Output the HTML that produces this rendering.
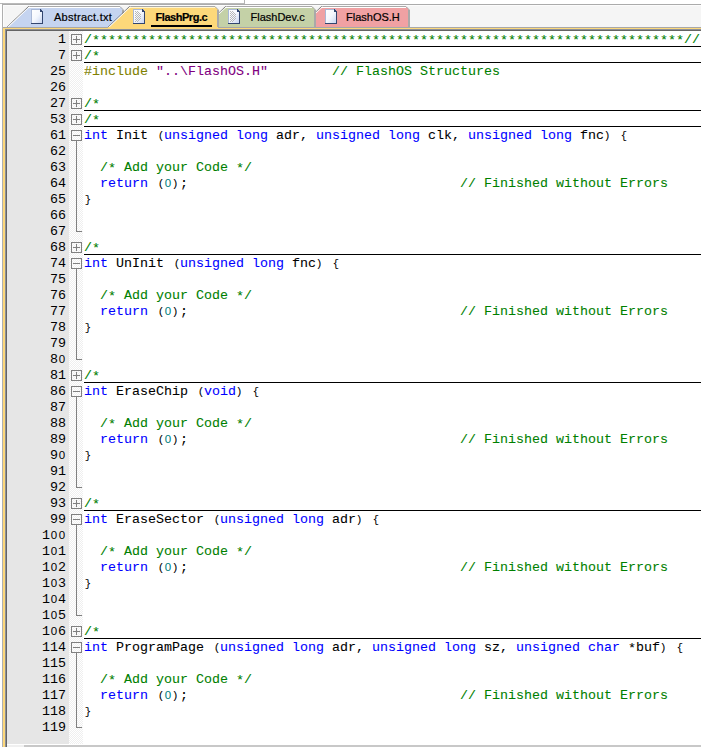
<!DOCTYPE html>
<html><head><meta charset="utf-8"><style>
html,body{margin:0;padding:0;}
body{width:701px;height:747px;overflow:hidden;position:relative;background:#fff;}
#wrap{position:absolute;left:0;top:0;width:701px;height:747px;overflow:hidden;}
.abs{position:absolute;}
.ln{position:absolute;left:7px;width:59px;height:16px;text-align:right;font:13.333px/16px "Liberation Mono",monospace;color:#000;}
.cd{position:absolute;left:84px;height:16px;white-space:pre;font:13.333px/16px "Liberation Mono",monospace;color:#000;-webkit-text-stroke:0.08px;}
.sep{position:absolute;left:84px;width:700px;height:1px;background:#000;}
.box{position:absolute;left:71px;width:9px;height:9px;border:1px solid #808080;background:transparent;}
.box i{position:absolute;background:#808080;}
.box .h{left:1px;top:4px;width:7px;height:1px;}
.box .v{left:4px;top:1px;width:1px;height:7px;}
.fl{position:absolute;left:76px;width:1px;background:#808080;}
.st{font-weight:normal;position:relative;top:1px;}
.pr{font-weight:normal;display:inline-block;width:8px;text-align:center;font-size:11px;line-height:12px;}
.pl{position:relative;left:1px;}
.prr{position:relative;left:-1px;}
.zr{font-weight:normal;display:inline-block;width:8px;text-align:center;font-family:"Liberation Sans",sans-serif;font-size:11.5px;line-height:12px;}
.br{font-weight:normal;display:inline-block;width:8px;text-align:center;font-size:10.5px;line-height:12px;}
.fh{position:absolute;left:76px;width:6px;height:1px;background:#808080;}
</style></head><body><div id="wrap">
<svg class="abs" style="left:0;top:0" width="701" height="747">
<defs><linearGradient id="pg" x1="0" y1="0" x2="1" y2="1"><stop offset="0" stop-color="#ffffff"/><stop offset="0.5" stop-color="#f4f7fd"/><stop offset="1" stop-color="#c9d6f2"/></linearGradient></defs>
<g shape-rendering="crispEdges">
<rect x="2" y="3" width="699" height="744" fill="#f5f5f5"/>
<rect x="0" y="0" width="701" height="3" fill="#fff"/>
<rect x="245" y="0" width="456" height="4" fill="#fff"/>
<rect x="0" y="3" width="245" height="1" fill="#bababa"/>
<rect x="244" y="0" width="1" height="4" fill="#b4b4b4"/>
<rect x="2" y="4" width="699" height="1" fill="#ababab"/>
<rect x="2" y="3" width="1" height="744" fill="#b0b0b0"/>
<rect x="3" y="5" width="698" height="1" fill="#fcfcfc"/>
<rect x="3" y="5" width="1" height="22" fill="#fcfcfc"/>
<rect x="3" y="27" width="698" height="1" fill="#a8a8a8"/>
</g>
<polygon points="301,27 321,8 321,7 406,7 409,10 409,27" fill="#f0a1a3" shape-rendering="crispEdges"/>
<rect x="321" y="6" width="85" height="1" fill="#a9a9a9"/>
<rect x="321" y="7" width="85" height="1" fill="#ffffff"/>
<line x1="406" y1="6.5" x2="409.5" y2="10" stroke="#a9a9a9" stroke-width="1"/>
<rect x="408" y="10" width="2" height="17" fill="#a9a9a9"/>
<line x1="299.5" y1="27.5" x2="321.5" y2="6.5" stroke="#6a6a6a" stroke-width="1" stroke-dasharray="1.2 0.3"/>
<line x1="300.7" y1="27.5" x2="322.5" y2="6.9" stroke="#ffffff" stroke-width="0.9"/>
<polygon points="205,27 225,8 225,7 312,7 315,10 315,27" fill="#c4d1a7" shape-rendering="crispEdges"/>
<rect x="225" y="6" width="87" height="1" fill="#a9a9a9"/>
<rect x="225" y="7" width="87" height="1" fill="#ffffff"/>
<line x1="312" y1="6.5" x2="315.5" y2="10" stroke="#a9a9a9" stroke-width="1"/>
<rect x="314" y="10" width="2" height="17" fill="#a9a9a9"/>
<line x1="203.5" y1="27.5" x2="225.5" y2="6.5" stroke="#6a6a6a" stroke-width="1" stroke-dasharray="1.2 0.3"/>
<line x1="204.7" y1="27.5" x2="226.5" y2="6.9" stroke="#ffffff" stroke-width="0.9"/>
<polygon points="8,27 28,8 28,7 120,7 123,10 123,27" fill="#c5d4f0" shape-rendering="crispEdges"/>
<rect x="28" y="6" width="92" height="1" fill="#a9a9a9"/>
<rect x="28" y="7" width="92" height="1" fill="#ffffff"/>
<line x1="120" y1="6.5" x2="123.5" y2="10" stroke="#a9a9a9" stroke-width="1"/>
<rect x="122" y="10" width="2" height="17" fill="#a9a9a9"/>
<line x1="6.5" y1="27.5" x2="28.5" y2="6.5" stroke="#6a6a6a" stroke-width="1" stroke-dasharray="1.2 0.3"/>
<line x1="7.7" y1="27.5" x2="29.5" y2="6.9" stroke="#ffffff" stroke-width="0.9"/>
<polygon points="109,27 129,8 129,7 215,7 218,10 218,27" fill="#fdd87a" shape-rendering="crispEdges"/>
<rect x="129" y="6" width="86" height="1" fill="#a9a9a9"/>
<rect x="129" y="7" width="86" height="1" fill="#fff4d0"/>
<line x1="215" y1="6.5" x2="218.5" y2="10" stroke="#a9a9a9" stroke-width="1"/>
<rect x="217" y="10" width="2" height="17" fill="#a9a9a9"/>
<line x1="107.5" y1="27.5" x2="129.5" y2="6.5" stroke="#6a6a6a" stroke-width="1" stroke-dasharray="1.2 0.3"/>
<line x1="108.7" y1="27.5" x2="130.5" y2="6.9" stroke="#ffffff" stroke-width="0.9"/>
<g shape-rendering="crispEdges">
<rect x="3" y="27" width="698" height="1" fill="#a8a8a8"/>
<rect x="108" y="27" width="110" height="1" fill="#fdd87a"/>
<rect x="3" y="28" width="698" height="720" fill="#fdd87a"/>
<rect x="5" y="29" width="696" height="720" fill="#8c9099"/>
<rect x="6" y="30" width="695" height="720" fill="#646464"/>
<rect x="7" y="31" width="694" height="720" fill="#ffffff"/>
<rect x="31" y="9" width="11" height="14" fill="#a9b8d6"/>
<rect x="32" y="10" width="10" height="13" fill="url(#pg)"/>
<polygon points="40,9 43,12 40,12" fill="#33466f"/>
<rect x="42" y="12" width="1" height="12" fill="#33466f"/>
<rect x="31" y="23" width="12" height="1" fill="#33466f"/>
<rect x="133" y="9" width="11" height="14" fill="#a9b8d6"/>
<rect x="134" y="10" width="10" height="13" fill="url(#pg)"/>
<polygon points="142,9 145,12 142,12" fill="#33466f"/>
<rect x="144" y="12" width="1" height="12" fill="#33466f"/>
<rect x="133" y="23" width="12" height="1" fill="#33466f"/>
<rect x="135" y="11" width="1" height="1" fill="#b8b8b8"/>
<rect x="137" y="11" width="1" height="1" fill="#b8b8b8"/>
<rect x="136" y="12" width="1" height="1" fill="#b8b8b8"/>
<rect x="138" y="12" width="1" height="1" fill="#b8b8b8"/>
<rect x="135" y="13" width="1" height="1" fill="#b8b8b8"/>
<rect x="137" y="13" width="1" height="1" fill="#b8b8b8"/>
<rect x="139" y="13" width="1" height="1" fill="#b8b8b8"/>
<rect x="136" y="14" width="1" height="1" fill="#b8b8b8"/>
<rect x="138" y="14" width="1" height="1" fill="#b8b8b8"/>
<rect x="140" y="14" width="1" height="1" fill="#b8b8b8"/>
<rect x="135" y="15" width="1" height="1" fill="#b8b8b8"/>
<rect x="137" y="15" width="1" height="1" fill="#b8b8b8"/>
<rect x="139" y="15" width="1" height="1" fill="#b8b8b8"/>
<rect x="136" y="16" width="1" height="1" fill="#b8b8b8"/>
<rect x="138" y="16" width="1" height="1" fill="#b8b8b8"/>
<rect x="140" y="16" width="1" height="1" fill="#b8b8b8"/>
<rect x="135" y="17" width="1" height="1" fill="#b8b8b8"/>
<rect x="137" y="17" width="1" height="1" fill="#b8b8b8"/>
<rect x="139" y="17" width="1" height="1" fill="#b8b8b8"/>
<rect x="136" y="18" width="1" height="1" fill="#b8b8b8"/>
<rect x="138" y="18" width="1" height="1" fill="#b8b8b8"/>
<rect x="140" y="18" width="1" height="1" fill="#b8b8b8"/>
<rect x="135" y="19" width="1" height="1" fill="#b8b8b8"/>
<rect x="137" y="19" width="1" height="1" fill="#b8b8b8"/>
<rect x="139" y="19" width="1" height="1" fill="#b8b8b8"/>
<rect x="136" y="20" width="1" height="1" fill="#b8b8b8"/>
<rect x="138" y="20" width="1" height="1" fill="#b8b8b8"/>
<rect x="135" y="21" width="1" height="1" fill="#b8b8b8"/>
<rect x="137" y="21" width="1" height="1" fill="#b8b8b8"/>
<rect x="228" y="9" width="11" height="14" fill="#a9b8d6"/>
<rect x="229" y="10" width="10" height="13" fill="url(#pg)"/>
<polygon points="237,9 240,12 237,12" fill="#33466f"/>
<rect x="239" y="12" width="1" height="12" fill="#33466f"/>
<rect x="228" y="23" width="12" height="1" fill="#33466f"/>
<rect x="230" y="11" width="1" height="1" fill="#b8b8b8"/>
<rect x="232" y="11" width="1" height="1" fill="#b8b8b8"/>
<rect x="231" y="12" width="1" height="1" fill="#b8b8b8"/>
<rect x="233" y="12" width="1" height="1" fill="#b8b8b8"/>
<rect x="230" y="13" width="1" height="1" fill="#b8b8b8"/>
<rect x="232" y="13" width="1" height="1" fill="#b8b8b8"/>
<rect x="234" y="13" width="1" height="1" fill="#b8b8b8"/>
<rect x="231" y="14" width="1" height="1" fill="#b8b8b8"/>
<rect x="233" y="14" width="1" height="1" fill="#b8b8b8"/>
<rect x="235" y="14" width="1" height="1" fill="#b8b8b8"/>
<rect x="230" y="15" width="1" height="1" fill="#b8b8b8"/>
<rect x="232" y="15" width="1" height="1" fill="#b8b8b8"/>
<rect x="234" y="15" width="1" height="1" fill="#b8b8b8"/>
<rect x="231" y="16" width="1" height="1" fill="#b8b8b8"/>
<rect x="233" y="16" width="1" height="1" fill="#b8b8b8"/>
<rect x="235" y="16" width="1" height="1" fill="#b8b8b8"/>
<rect x="230" y="17" width="1" height="1" fill="#b8b8b8"/>
<rect x="232" y="17" width="1" height="1" fill="#b8b8b8"/>
<rect x="234" y="17" width="1" height="1" fill="#b8b8b8"/>
<rect x="231" y="18" width="1" height="1" fill="#b8b8b8"/>
<rect x="233" y="18" width="1" height="1" fill="#b8b8b8"/>
<rect x="235" y="18" width="1" height="1" fill="#b8b8b8"/>
<rect x="230" y="19" width="1" height="1" fill="#b8b8b8"/>
<rect x="232" y="19" width="1" height="1" fill="#b8b8b8"/>
<rect x="234" y="19" width="1" height="1" fill="#b8b8b8"/>
<rect x="231" y="20" width="1" height="1" fill="#b8b8b8"/>
<rect x="233" y="20" width="1" height="1" fill="#b8b8b8"/>
<rect x="230" y="21" width="1" height="1" fill="#b8b8b8"/>
<rect x="232" y="21" width="1" height="1" fill="#b8b8b8"/>
<rect x="325" y="9" width="11" height="14" fill="#a9b8d6"/>
<rect x="326" y="10" width="10" height="13" fill="url(#pg)"/>
<polygon points="334,9 337,12 334,12" fill="#33466f"/>
<rect x="336" y="12" width="1" height="12" fill="#33466f"/>
<rect x="325" y="23" width="12" height="1" fill="#33466f"/>
<rect x="151" y="25" width="61" height="2" fill="#000"/>
</g>
<text x="54" y="20.5" font-family="Liberation Sans" font-size="11" stroke="#000" stroke-width="0.2" letter-spacing="0.25" fill="#000">Abstract.txt</text>
<text x="155.5" y="20.5" font-family="Liberation Sans" font-size="11" stroke="#000" stroke-width="0.2" font-weight="bold" letter-spacing="-0.45" fill="#000">FlashPrg.c</text>
<text x="250.5" y="20.5" font-family="Liberation Sans" font-size="11" stroke="#000" stroke-width="0.2" fill="#000">FlashDev.c</text>
<text x="346" y="20.5" font-family="Liberation Sans" font-size="11" stroke="#000" stroke-width="0.2" fill="#000">FlashOS.H</text>
</svg>
<div class="abs" style="left:7px;top:31px;width:62px;height:713px;background:#e6e6e6"></div>
<div class="abs" style="left:69px;top:31px;width:14px;height:713px;background:repeating-conic-gradient(#efefef 0 25%,#fff 0 50%) 0 0/2px 2px"></div>
<div class="ln" style="top:32px">1</div>
<div class="cd" style="top:32px"><span style="color:#008000">/<b class="st">*</b><b class="st">*</b><b class="st">*</b><b class="st">*</b><b class="st">*</b><b class="st">*</b><b class="st">*</b><b class="st">*</b><b class="st">*</b><b class="st">*</b><b class="st">*</b><b class="st">*</b><b class="st">*</b><b class="st">*</b><b class="st">*</b><b class="st">*</b><b class="st">*</b><b class="st">*</b><b class="st">*</b><b class="st">*</b><b class="st">*</b><b class="st">*</b><b class="st">*</b><b class="st">*</b><b class="st">*</b><b class="st">*</b><b class="st">*</b><b class="st">*</b><b class="st">*</b><b class="st">*</b><b class="st">*</b><b class="st">*</b><b class="st">*</b><b class="st">*</b><b class="st">*</b><b class="st">*</b><b class="st">*</b><b class="st">*</b><b class="st">*</b><b class="st">*</b><b class="st">*</b><b class="st">*</b><b class="st">*</b><b class="st">*</b><b class="st">*</b><b class="st">*</b><b class="st">*</b><b class="st">*</b><b class="st">*</b><b class="st">*</b><b class="st">*</b><b class="st">*</b><b class="st">*</b><b class="st">*</b><b class="st">*</b><b class="st">*</b><b class="st">*</b><b class="st">*</b><b class="st">*</b><b class="st">*</b><b class="st">*</b><b class="st">*</b><b class="st">*</b><b class="st">*</b><b class="st">*</b><b class="st">*</b><b class="st">*</b><b class="st">*</b><b class="st">*</b><b class="st">*</b><b class="st">*</b><b class="st">*</b><b class="st">*</b><b class="st">*</b>//</span></div>
<div class="sep" style="top:46px"></div>
<div class="box" style="top:34px"><i class="h"></i><i class="v"></i></div>
<div class="ln" style="top:48px">7</div>
<div class="cd" style="top:48px"><span style="color:#008000">/<b class="st">*</b></span></div>
<div class="sep" style="top:62px"></div>
<div class="box" style="top:50px"><i class="h"></i><i class="v"></i></div>
<div class="ln" style="top:64px">25</div>
<div class="cd" style="top:64px"><span style="color:#808000">#include</span> <span style="color:#800080">&quot;..\FlashOS.H&quot;</span>        <span style="color:#008000">// FlashOS Structures</span></div>
<div class="ln" style="top:80px">26</div>
<div class="cd" style="top:80px"></div>
<div class="ln" style="top:96px">27</div>
<div class="cd" style="top:96px"><span style="color:#008000">/<b class="st">*</b></span></div>
<div class="sep" style="top:110px"></div>
<div class="box" style="top:98px"><i class="h"></i><i class="v"></i></div>
<div class="ln" style="top:112px">53</div>
<div class="cd" style="top:112px"><span style="color:#008000">/<b class="st">*</b></span></div>
<div class="sep" style="top:126px"></div>
<div class="box" style="top:114px"><i class="h"></i><i class="v"></i></div>
<div class="ln" style="top:128px">61</div>
<div class="cd" style="top:128px"><span style="color:#0000ff">int</span> Init <b class="pr pl">(</b><span style="color:#0000ff">unsigned long</span> adr, <span style="color:#0000ff">unsigned long</span> clk, <span style="color:#0000ff">unsigned long</span> fnc<b class="pr prr">)</b> <b class="br">{</b></div>
<div class="box" style="top:130px"><i class="h"></i></div>
<div class="fl" style="top:141px;height:2px"></div>
<div class="ln" style="top:144px">62</div>
<div class="cd" style="top:144px"></div>
<div class="fl" style="top:143px;height:16px"></div>
<div class="ln" style="top:160px">63</div>
<div class="cd" style="top:160px">  <span style="color:#008000">/<b class="st">*</b> Add your Code <b class="st">*</b>/</span></div>
<div class="fl" style="top:159px;height:16px"></div>
<div class="ln" style="top:176px">64</div>
<div class="cd" style="top:176px">  <span style="color:#0000ff">return</span> <b class="pr pl">(</b><span style="color:#008080"><b class="zr">0</b></span><b class="pr prr">)</b>;                                  <span style="color:#008000">// Finished without Errors</span></div>
<div class="fl" style="top:175px;height:16px"></div>
<div class="ln" style="top:192px">65</div>
<div class="cd" style="top:192px"><b class="br">}</b></div>
<div class="fl" style="top:191px;height:16px"></div>
<div class="ln" style="top:208px">66</div>
<div class="cd" style="top:208px"></div>
<div class="fl" style="top:207px;height:16px"></div>
<div class="ln" style="top:224px">67</div>
<div class="cd" style="top:224px"></div>
<div class="fl" style="top:223px;height:9px"></div>
<div class="fh" style="top:231px"></div>
<div class="ln" style="top:240px">68</div>
<div class="cd" style="top:240px"><span style="color:#008000">/<b class="st">*</b></span></div>
<div class="sep" style="top:254px"></div>
<div class="box" style="top:242px"><i class="h"></i><i class="v"></i></div>
<div class="ln" style="top:256px">74</div>
<div class="cd" style="top:256px"><span style="color:#0000ff">int</span> UnInit <b class="pr pl">(</b><span style="color:#0000ff">unsigned long</span> fnc<b class="pr prr">)</b> <b class="br">{</b></div>
<div class="box" style="top:258px"><i class="h"></i></div>
<div class="fl" style="top:269px;height:2px"></div>
<div class="ln" style="top:272px">75</div>
<div class="cd" style="top:272px"></div>
<div class="fl" style="top:271px;height:16px"></div>
<div class="ln" style="top:288px">76</div>
<div class="cd" style="top:288px">  <span style="color:#008000">/<b class="st">*</b> Add your Code <b class="st">*</b>/</span></div>
<div class="fl" style="top:287px;height:16px"></div>
<div class="ln" style="top:304px">77</div>
<div class="cd" style="top:304px">  <span style="color:#0000ff">return</span> <b class="pr pl">(</b><span style="color:#008080"><b class="zr">0</b></span><b class="pr prr">)</b>;                                  <span style="color:#008000">// Finished without Errors</span></div>
<div class="fl" style="top:303px;height:16px"></div>
<div class="ln" style="top:320px">78</div>
<div class="cd" style="top:320px"><b class="br">}</b></div>
<div class="fl" style="top:319px;height:16px"></div>
<div class="ln" style="top:336px">79</div>
<div class="cd" style="top:336px"></div>
<div class="fl" style="top:335px;height:16px"></div>
<div class="ln" style="top:352px">8<b class="zr">0</b></div>
<div class="cd" style="top:352px"></div>
<div class="fl" style="top:351px;height:9px"></div>
<div class="fh" style="top:359px"></div>
<div class="ln" style="top:368px">81</div>
<div class="cd" style="top:368px"><span style="color:#008000">/<b class="st">*</b></span></div>
<div class="sep" style="top:382px"></div>
<div class="box" style="top:370px"><i class="h"></i><i class="v"></i></div>
<div class="ln" style="top:384px">86</div>
<div class="cd" style="top:384px"><span style="color:#0000ff">int</span> EraseChip <b class="pr pl">(</b><span style="color:#0000ff">void</span><b class="pr prr">)</b> <b class="br">{</b></div>
<div class="box" style="top:386px"><i class="h"></i></div>
<div class="fl" style="top:397px;height:2px"></div>
<div class="ln" style="top:400px">87</div>
<div class="cd" style="top:400px"></div>
<div class="fl" style="top:399px;height:16px"></div>
<div class="ln" style="top:416px">88</div>
<div class="cd" style="top:416px">  <span style="color:#008000">/<b class="st">*</b> Add your Code <b class="st">*</b>/</span></div>
<div class="fl" style="top:415px;height:16px"></div>
<div class="ln" style="top:432px">89</div>
<div class="cd" style="top:432px">  <span style="color:#0000ff">return</span> <b class="pr pl">(</b><span style="color:#008080"><b class="zr">0</b></span><b class="pr prr">)</b>;                                  <span style="color:#008000">// Finished without Errors</span></div>
<div class="fl" style="top:431px;height:16px"></div>
<div class="ln" style="top:448px">9<b class="zr">0</b></div>
<div class="cd" style="top:448px"><b class="br">}</b></div>
<div class="fl" style="top:447px;height:16px"></div>
<div class="ln" style="top:464px">91</div>
<div class="cd" style="top:464px"></div>
<div class="fl" style="top:463px;height:16px"></div>
<div class="ln" style="top:480px">92</div>
<div class="cd" style="top:480px"></div>
<div class="fl" style="top:479px;height:9px"></div>
<div class="fh" style="top:487px"></div>
<div class="ln" style="top:496px">93</div>
<div class="cd" style="top:496px"><span style="color:#008000">/<b class="st">*</b></span></div>
<div class="sep" style="top:510px"></div>
<div class="box" style="top:498px"><i class="h"></i><i class="v"></i></div>
<div class="ln" style="top:512px">99</div>
<div class="cd" style="top:512px"><span style="color:#0000ff">int</span> EraseSector <b class="pr pl">(</b><span style="color:#0000ff">unsigned long</span> adr<b class="pr prr">)</b> <b class="br">{</b></div>
<div class="box" style="top:514px"><i class="h"></i></div>
<div class="fl" style="top:525px;height:2px"></div>
<div class="ln" style="top:528px">1<b class="zr">0</b><b class="zr">0</b></div>
<div class="cd" style="top:528px"></div>
<div class="fl" style="top:527px;height:16px"></div>
<div class="ln" style="top:544px">1<b class="zr">0</b>1</div>
<div class="cd" style="top:544px">  <span style="color:#008000">/<b class="st">*</b> Add your Code <b class="st">*</b>/</span></div>
<div class="fl" style="top:543px;height:16px"></div>
<div class="ln" style="top:560px">1<b class="zr">0</b>2</div>
<div class="cd" style="top:560px">  <span style="color:#0000ff">return</span> <b class="pr pl">(</b><span style="color:#008080"><b class="zr">0</b></span><b class="pr prr">)</b>;                                  <span style="color:#008000">// Finished without Errors</span></div>
<div class="fl" style="top:559px;height:16px"></div>
<div class="ln" style="top:576px">1<b class="zr">0</b>3</div>
<div class="cd" style="top:576px"><b class="br">}</b></div>
<div class="fl" style="top:575px;height:16px"></div>
<div class="ln" style="top:592px">1<b class="zr">0</b>4</div>
<div class="cd" style="top:592px"></div>
<div class="fl" style="top:591px;height:16px"></div>
<div class="ln" style="top:608px">1<b class="zr">0</b>5</div>
<div class="cd" style="top:608px"></div>
<div class="fl" style="top:607px;height:9px"></div>
<div class="fh" style="top:615px"></div>
<div class="ln" style="top:624px">1<b class="zr">0</b>6</div>
<div class="cd" style="top:624px"><span style="color:#008000">/<b class="st">*</b></span></div>
<div class="sep" style="top:638px"></div>
<div class="box" style="top:626px"><i class="h"></i><i class="v"></i></div>
<div class="ln" style="top:640px">114</div>
<div class="cd" style="top:640px"><span style="color:#0000ff">int</span> ProgramPage <b class="pr pl">(</b><span style="color:#0000ff">unsigned long</span> adr, <span style="color:#0000ff">unsigned long</span> sz, <span style="color:#0000ff">unsigned char</span> <b class="st">*</b>buf<b class="pr prr">)</b> <b class="br">{</b></div>
<div class="box" style="top:642px"><i class="h"></i></div>
<div class="fl" style="top:653px;height:2px"></div>
<div class="ln" style="top:656px">115</div>
<div class="cd" style="top:656px"></div>
<div class="fl" style="top:655px;height:16px"></div>
<div class="ln" style="top:672px">116</div>
<div class="cd" style="top:672px">  <span style="color:#008000">/<b class="st">*</b> Add your Code <b class="st">*</b>/</span></div>
<div class="fl" style="top:671px;height:16px"></div>
<div class="ln" style="top:688px">117</div>
<div class="cd" style="top:688px">  <span style="color:#0000ff">return</span> <b class="pr pl">(</b><span style="color:#008080"><b class="zr">0</b></span><b class="pr prr">)</b>;                                  <span style="color:#008000">// Finished without Errors</span></div>
<div class="fl" style="top:687px;height:16px"></div>
<div class="ln" style="top:704px">118</div>
<div class="cd" style="top:704px"><b class="br">}</b></div>
<div class="fl" style="top:703px;height:16px"></div>
<div class="ln" style="top:720px">119</div>
<div class="cd" style="top:720px"></div>
<div class="fl" style="top:719px;height:9px"></div>
<div class="fh" style="top:727px"></div>
<div class="abs" style="left:7px;top:744px;width:694px;height:1px;background:#fff"></div>
<div class="abs" style="left:7px;top:745px;width:694px;height:2px;background:#f0f0f0"></div>
<div class="abs" style="left:24px;top:745px;width:677px;height:2px;background:#c8c8c8"></div>
</div></body></html>
